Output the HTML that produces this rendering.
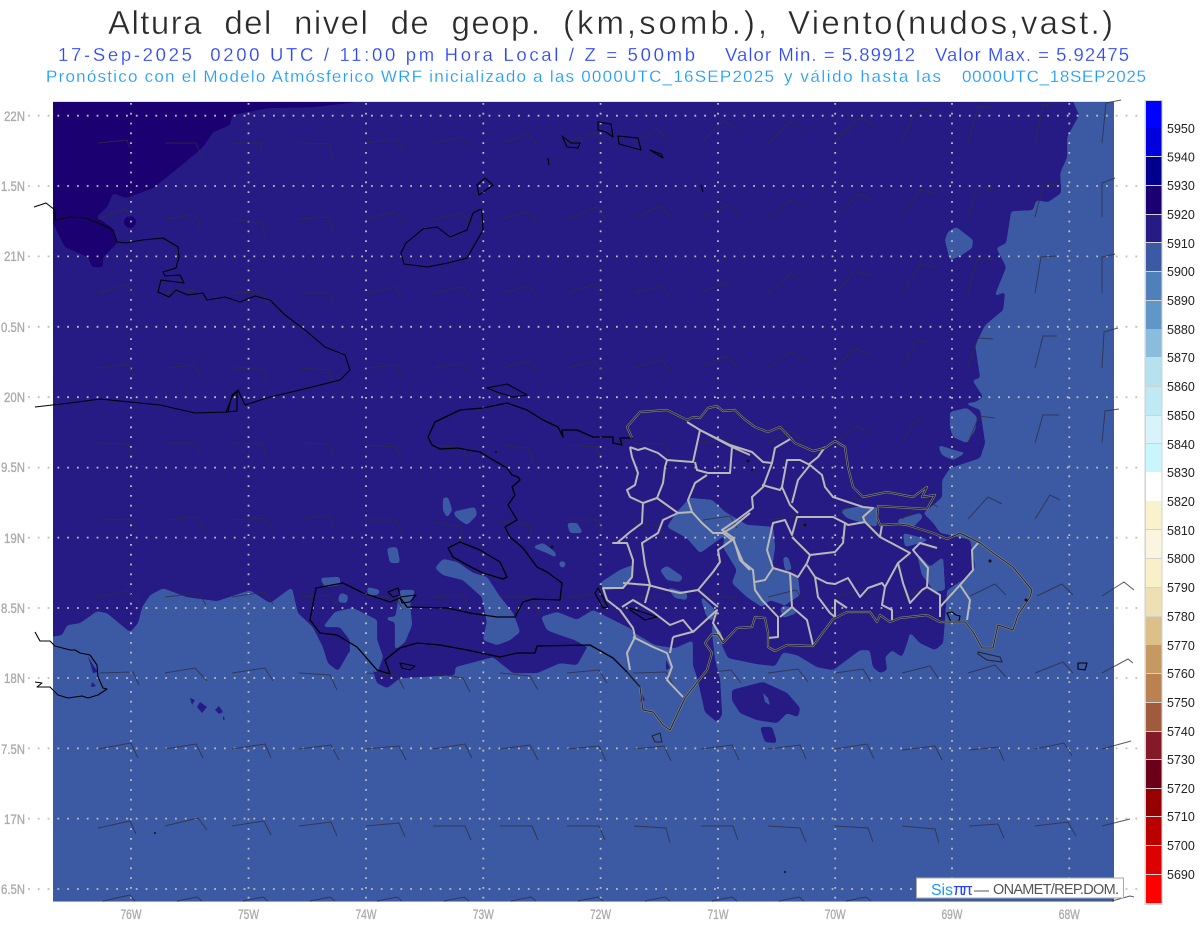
<!DOCTYPE html>
<html><head><meta charset="utf-8"><title>Altura del nivel de geop.</title>
<style>html,body{margin:0;padding:0;background:#fff}svg{display:block}text{font-family:"Liberation Sans",sans-serif}</style></head>
<body>
<svg width="1200" height="927" viewBox="0 0 1200 927" xmlns="http://www.w3.org/2000/svg">
<defs>
<filter id="g" filterUnits="userSpaceOnUse" x="0" y="60" width="1200" height="900" color-interpolation-filters="sRGB"><feGaussianBlur stdDeviation="1.7"/><feColorMatrix type="matrix" values="1 0 0 0 0 0 1 0 0 0 0 0 1 0 0 0 0 0 12 -5"/></filter>
<clipPath id="m"><rect x="53" y="102" width="1061" height="799"/></clipPath>
</defs>
<rect width="1200" height="927" fill="#fff"/>
<!-- titles -->
<g font-size="33" fill="#2b2b2b" stroke="#fff" stroke-width=".45">
<text x="108" y="34" textLength="432" lengthAdjust="spacing" xml:space="preserve">Altura  del  nivel  de  geop.</text>
<text x="563" y="34" textLength="204" lengthAdjust="spacing">(km,somb.),</text>
<text x="788" y="34" textLength="325" lengthAdjust="spacing">Viento(nudos,vast.)</text>
</g>
<g font-size="18.500" fill="#2a45ff" stroke="#fff" stroke-width=".2">
<text x="58" y="61" textLength="637" lengthAdjust="spacing" xml:space="preserve">17-Sep-2025  0200 UTC / 11:00 pm Hora Local / Z = 500mb</text>
<text x="725" y="61" textLength="190" lengthAdjust="spacing">Valor Min. = 5.89912</text>
<text x="935" y="61" textLength="194" lengthAdjust="spacing">Valor Max. = 5.92475</text>
</g>
<g font-size="17" fill="#1a9bff" stroke="#fff" stroke-width=".2">
<text x="46" y="82" textLength="728" lengthAdjust="spacing">Pronóstico con el Modelo Atmósferico WRF inicializado a las 0000UTC_16SEP2025</text>
<text x="784" y="82" textLength="157" lengthAdjust="spacing">y válido hasta las</text>
<text x="962" y="82" textLength="184" lengthAdjust="spacing">0000UTC_18SEP2025</text>
</g>

<!-- map base -->
<rect x="53" y="102" width="1061" height="799" fill="#3c5aa4"/>
<rect x="53" y="101" width="1061" height="1" fill="#dfe0ee"/>
<rect x="53" y="901" width="1061" height="1" fill="#8fa2d8"/>
<g clip-path="url(#m)">
<g filter="url(#g)">
<polygon fill="#261a85" points="30,80 1073,80 1073,102 1079,115 1067,137 1067,157 1060,173 1061,193 1048,202 1036,200 1033,210 1011,211 1006,243 996,248 1006,267 994,297 1005,292 1003,310 985,325 975,345 980,378 972,380 983,397 975,402 963,403 980,410 985,443 980,458 950,468 942,480 942,497 933,505 923,513 933,523 940,533 970,540 975,567 967,577 947,590 943,643 935,650 920,643 910,632 907,643 902,657 892,650 885,657 887,670 880,673 873,667 870,650 860,650 833,670 817,667 797,655 783,652 775,666 757,664 728,658 722,645 722,633 712,622 712,635 715,660 720,680 722,715 717,722 705,712 698,680 693,665 693,640 675,648 655,645 633,632 613,622 593,612 592,640 587,647 577,665 560,663 537,673 513,673 493,657 455,667 455,675 400,678 387,688 377,683 370,660 350,650 338,671 328,663 323,647 313,627 298,613 292,587 270,603 250,590 217,601 187,597 163,588 150,595 142,607 138,623 130,632 107,613 97,611 80,623 67,625 62,635 30,640"/>
</g>
<g filter="url(#g)">
<polygon fill="#1a0070" points="30,80 356,80 356,102 314,107 268,108 232,115 230,125 213,132 203,147 184,163 153,188 126,198 113,193 107,207 96,217 111,227 117,243 103,257 103,267 92,267 88,257 65,247 53,223 30,215"/>
<circle cx="130" cy="222" r="6" fill="#1a0070"/><circle cx="125" cy="183" r="3.500" fill="#1a0070"/>
</g>
<g filter="url(#g)" fill="#3c5aa4">
<polygon points="945,240 948,232 956,227 973,240 972,248 960,256 950,260"/>
<polygon points="950,412 967,408 977,417 975,430 967,443 953,437 950,427"/>
<polygon points="938,445 960,452 967,452 953,460 942,455"/>
<polygon points="443,498 448,497 452,510 447,518 443,510"/>
<polygon points="453,512 475,507 477,515 467,525 457,518"/>
<polygon points="567,523 577,523 583,533 570,533"/>
<polygon points="532,547 543,543 555,552 557,558 547,553"/>
<polygon points="559,561 566,562 564,568 560,567"/>
<polygon points="435,568 443,559 457,562 473,573 487,577 500,597 513,613 520,632 510,640 497,645 483,640 487,622 482,597 463,580 443,575"/>
<polygon points="387,548 397,547 400,563 390,563"/>
<polygon points="541,617 557,612 577,620 593,610 613,620 633,630 625,645 600,660 587,647 575,640 560,635 547,630"/>
<polygon points="335,612 353,608 377,620 377,640 383,657 377,673 350,657 350,640 340,627 323,627"/>
<polygon points="320,578 340,577 340,585 325,587"/>
<polygon points="367,587 380,590 378,595 368,595"/>
<polygon points="340,593 348,595 347,603 338,602"/>
<polygon points="387,617 397,617 395,622 387,620"/>
<polygon points="400,590 415,590 410,605 412,625 405,642 395,650 395,620"/>
<polygon points="667,527 677,512 690,498 712,500 725,512 747,525 773,527 775,547 772,567 798,577 800,595 785,605 770,600 762,607 747,597 732,583 737,570 723,547 725,535 700,553 687,538"/>
<polygon points="780,607 793,607 797,613 783,618"/>
<polygon points="783,557 788,557 792,570 785,570"/>
<polygon points="840,510 857,507 877,507 877,527 860,522 847,518"/>
<polygon points="897,520 920,513 923,517 913,527 900,525"/>
<polygon points="903,533 930,540 905,547"/>
<polygon points="917,553 930,567 943,557 945,590 933,592 930,585 922,575"/>
<polygon points="600,583 620,570 633,565 633,578 623,588 605,590"/>
<polygon points="660,570 667,566 683,577 680,582 667,580"/>
<polygon points="667,587 687,593 687,600 675,598"/>
<polygon points="700,595 715,610 712,622 706,615"/>
</g>
<g filter="url(#g)" fill="#261a85">
<polygon points="732,690 763,682 787,693 800,708 798,717 787,713 777,723 757,720 740,713 732,700"/>
<polygon points="760,727 772,727 777,743 765,742"/>
</g>
<g fill="#261a85">
<polygon points="190,698 195,700 192,705"/><polygon points="200,702 207,707 202,713 197,707"/><polygon points="219,706 223,712 219,714 215,710"/><polygon points="223,716 225,719 223,720"/>
<polygon points="88,656 93,665 98,672 93,673"/><polygon points="92,682 96,686 91,687"/>
<polygon points="640,690 645,700 640,702"/><polygon points="666,660 670,668 666,670"/>
</g>
<polygon points="763,693 768,698 770,705 765,702" fill="#3c5aa4"/>
</g>

<!-- grid -->
<g stroke="#bfbfb2" stroke-width="1.8" stroke-dasharray="1.800 8" fill="none">
<path d="M28 115.700H1140M28 186H1140M28 256.400H1140M28 326.800H1140M28 397.200H1140M28 467.600H1140M28 537.600H1140M28 608H1140M28 678H1140M28 748.400H1140M28 818.600H1140M28 889H1140"/>
<path d="M131 103V906M248.500 103V906M366 103V906M483.300 103V906M600.600 103V906M718 103V906M835.200 103V906M952 103V906M1069.300 103V906"/>
</g>

<!-- barbs -->
<path fill="none" stroke="#2e2e44" stroke-width="1" opacity=".8" d="
M98 143l29-3l3 8M165 143l31 0l6 15M232 143l29 0l0 7M299 143l30 1l4 16M366 143l30-4l7 13M434 143l28-6l9 12M501 143l28-9l8 12M567 143l28-10l8 11M634 143l22-14l12 11M701 143l22-22l14 8M768 143l22-21l14 8M834 143l25-25l14 7M901 143l15-32l16 0M968 143l10-36l16 0M1035 143l8-38l16-2M1102 143l4-40l15-3
M98 219l28-10l4 9M165 219l30-4l6 13M232 219l30 4l4 15M299 219l29-2l6 13M366 219l29-7l8 12M434 219l28-6l9 10M501 219l28-7l8 11M567 219l30-12l8 12M634 218l26-12l11 11M701 218l27-13l12 11M768 218l23-18l13 8M835 217l24-23l13 6M902 217l18-27l15 3M968 217l10-30l16 2M1035 217l8-32l16-1M1102 217l0-34l13-5
M98 293l29-8l9 12M165 293l30-3l6 12M232 293l30-1l6 13M299 293l30 0l5 13M366 293l29-6l8 12M434 293l28-6l9 10M501 293l28-7l8 11M567 293l28-9l8 11M634 293l27-7l10 11M701 293l26-11l11 11M768 293l23-19l13 8M835 293l20-22l18 5M902 293l18-29l15 3M968 293l9-34l17 0M1035 293l6-36l15-1M1102 293l0-36l13-3
M98 368l30-4l7 12M165 368l30-3l6 13M232 368l31 0l5 14M299 368l30 2l5 14M366 368l30-3l7 12M434 368l28-5l9 11M501 368l28-7l8 11M567 368l28-7l8 11M634 368l27-8l10 11M701 368l25-12l11 11M768 368l23-16l13 9M835 368l20-20l14 7M902 368l15-28l14 4M968 368l10-30l15 1M1035 368l8-32l14 0M1102 368l2-36l14-4
M98 443l30 1l5 13M165 443l30 0l5 13M232 443l30 1l5 14M299 443l30 1l5 13M366 445l30 2l5 13M433 445l30 3l5 13M500 445l28 3l5 13M567 445l30 2l3 13M633 443l32 1l5 13M700 443l30-3l7 12M768 443l23-12l13 11M838 440l20-14l13 9M902 443l15-24l5 5M968 443l11-27l16 2M1035 443l8-28l16 0M1102 443l3-32l14-2
M98 520l32-1l8 12M165 520l32-3l8 14M232 520l33-2l8 13M299 520l29-5l7 13M366 520l30 0l7 14M433 522l28 5l2 13M500 522l30 3l2 14M567 520l32 0l3 15M633 522l28 5l3 17M703 520l27-4l7 12M768 520l28-4l7 12M835 519l20-21l10 5M902 519l25-19l11 7M968 519l20-22l14 7M1035 519l15-24l10 5
M98 597l30-6l12 12M165 597l34-4l7 12M232 597l33-5l8 12M299 597l31-2l8 12M366 597l30 0l7 13M433 597l30-2l5 15M500 597l32 0l7 15M567 598l28-5l10 17M633 598l30-3l5 15M703 597l30 0l7 13M768 597l28-7l8 12M835 597l28-8l8 11M902 597l28-10l8 11M970 596l25-12l11 11M1037 596l25-12l11 11M1102 596l22-14l10 8
M100 673l33-1l6 13M165 673l30-5l12 13M232 673l33-5l8 13M299 673l31 2l7 15M366 673l31 2l7 14M433 673l30 5l7 14M500 673l30 3l8 14M567 673l32-3l8 13M633 673l33-1l7 13M703 673l28-3l10 13M768 673l30-4l10 13M835 673l28-4l8 13M902 673l28-7l8 12M968 673l27-8l11 12M1035 673l28-11l10 11M1102 673l26-14l5 4
M98 749l33-6l7 15M165 749l31-5l7 14M232 749l33-5l6 14M299 749l32-4l8 15M366 749l33-3l7 14M433 749l32-5l7 14M500 749l30-4l8 15M567 749l32-3l7 15M634 749l30-3l7 15M701 749l31-4l7 15M768 749l32-4l6 14M835 749l32-5l7 15M902 750l33-4l7 14M969 750l29-3l6 14M1035 749l29-6l8 13M1102 749l29-8
M98 828l32-7l6 13M165 826l33-8l9 12M232 826l32-5l7 14M299 826l32-4l6 14M366 826l33-3l6 14M433 826l32 0l6 14M500 826l32 0l6 14M567 826l32 0l6 14M634 826l32 2l4 15M701 826l32 0l5 14M768 826l32 2l6 14M835 826l33 2l5 14M902 826l33 3l4 14M969 826l29-2l6 14M1035 826l33-4l8 14M1102 826l28-7
M103 901l27-6l5 6M177 901l20-4l5 4M243 901l20-4l5 4M310 901l20-4l5 4M377 901l20-4l5 4M444 901l20-4l5 4M511 901l20-4l5 4M578 901l20-4l5 4M645 901l20-4l5 4M712 901l20-4l5 4M779 901l20-4l5 4M846 901l20-4l5 4M1112 901l18-5l4 1"/>

<!-- black coasts -->
<g fill="none" stroke="#000" stroke-width="1.1" stroke-linejoin="round">
<path d="M34 207 46 203 55 210 55 220 69 217 86 218 103 225 113 230 117 242 126 243 142 240 163 238 178 247 179 257 176 268 163 272 165 276 180 275 184 283 161 280 158 292 169 297 176 290 188 295 203 293 207 300 225 297 240 302 255 296 270 300 285 315 305 330 325 347 345 355 350 370 340 380 300 390 270 397 245 405 238 390 232 395 228 412 195 413 160 405 130 402 100 399 70 403 35 407"/>
<path d="M232 397 237 391 237 411 226 412z"/>
<path d="M481 209 473 213 467 230 450 237 437 227 423 229 406 243 401 253 404 264 427 267 448 263 467 258 483 230 482 213z"/>
<path d="M485 178 477 185 479 195 493 185z"/>
<path d="M562 136 567 147 578 148 580 143 571 143z"/>
<path d="M548 158 549 165"/>
<path d="M598 122 611 124 613 137 606 132 598 130z"/>
<path d="M618 136 638 138 641 150 619 144z"/>
<path d="M650 150 663 158 661 154z"/>
<path d="M701 185 703 192"/>
<path d="M35 632 40 641 50 641 55 646 70 650 75 650 80 653 90 655 97 665 98 677 103 688 107 689 98 695 88 698 82 696 68 698 58 695 50 687 37 687 42 683 35 682"/>
<path stroke-width="1.3" d="M428 437 435 422 460 410 483 408 507 403 527 410 543 420 558 427 563 437 562 430 577 430 593 437 613 437 613 443 622 445 620 438 633 438"/>
<path stroke-width="1.3" d="M428 437 432 445 440 449 458 448 468 450 480 452 493 460 507 468 512 475 518 477 520 480 512 487 515 495 508 505 517 520 505 527 510 537 523 548 537 567 547 572 562 583 560 600 533 599 523 602 515 617 497 617 470 613 447 608 407 607 402 600 400 598 390 602 363 593 343 583 316 588 310 620 320 633 337 635 357 647 377 670 390 674 385 660 400 648 417 643 440 645 467 650 500 657 517 653 535 653 537 646 590 645 613 658 627 672 640 687"/>
<path stroke-width="1.3" d="M448 548 460 542 480 550 500 562 507 577 503 579 483 573 467 565 453 557z"/>
<path d="M487 388 507 384 527 395 513 397 497 392z"/>
<path stroke-width="1.2" d="M598 588 608 607 603 608 595 593z"/>
<path d="M630 608 657 617 645 620 630 610z"/>
<path d="M400 597 416 595 410 602 402 603zM388 592 398 588 400 595 393 597z"/>
<path d="M400 663 415 666 410 670 402 668z"/>
<path d="M1078 663 1087 663 1085 670 1078 669z"/>
<path d="M947 613 952 612 956 615 960 616 959 621 951 622z"/>
</g>

<!-- province lines (gray) -->
<g fill="none" stroke="#b8b8b8" stroke-width="2" stroke-linejoin="round">
<path d="M630 447 638 450 645 448 658 453 667 460 665 467 663 483 657 498 643 503 630 497 627 490 635 485 638 473 632 457 630 447"/>
<path d="M643 503 642 523 630 532 617 543 613 543 627 543 633 560 632 577 623 588 603 588 607 600 620 610 633 628 635 637 627 653 630 670"/>
<path d="M633 637 653 647 667 653 672 667 667 680 683 697M673 637 670 653M673 637 692 632"/>
<path d="M623 583 648 585 667 590 680 593 698 590 713 603 718 607"/>
<path d="M698 590 713 572 720 562 718 550 732 540 723 533 733 527 750 513"/>
<path d="M645 603 650 585 645 565 642 543 658 533 663 520 678 513 692 512 688 500 695 483 707 475M692 512 702 523 713 533 723 533"/>
<path d="M657 498 678 513M667 460 693 462 700 430 687 422M695 462 697 470 708 473 730 473 732 447M700 430 732 447 750 455"/>
<path d="M733 537 740 560 750 570"/>
<path d="M622 607 633 600 653 612 670 625 683 620 693 632 717 610 713 623 723 640"/>
<path d="M700 430 730 445 752 452 763 462 772 463 763 487 752 497 753 508 737 520 722 530 732 537 743 562 753 570 755 590 762 600 778 617 778 637 768 638"/>
<path d="M755 582 765 580 773 568 767 550 773 523 785 520 792 535 797 517 833 517 845 523 843 543 835 552 810 555 792 537"/>
<path d="M773 568 790 573 798 577 807 563 810 555M790 573 792 607 807 620 813 645M780 617 792 607"/>
<path d="M807 565 815 577 827 583 835 584 848 578 860 597 868 588 882 583 885 587 882 605 892 610 892 620"/>
<path d="M815 577 818 597 830 613 835 617 835 600 847 608"/>
<path d="M885 587 898 563 910 553 880 537 865 522 848 525 845 523"/>
<path d="M898 563 903 583 910 603 922 590 927 587 940 595 940 617"/>
<path d="M927 587 928 568 913 550 920 543 937 548"/>
<path d="M940 607 960 585 970 600 967 620"/>
<path d="M960 585 973 570 972 550 978 543M880 537 882 525"/>
<path d="M865 522 863 517 873 508 863 507 833 497 825 487 822 475 810 465 800 460 787 460 782 487 790 505 798 513M810 465 798 480 792 503"/>
<path d="M762 485 780 490 782 487M825 447 818 457 808 465M792 438 775 448 772 463"/>
</g>

<!-- DR coast (dark with light halo) -->
<path fill="none" stroke="#8a8a8a" stroke-width="2.2" stroke-linejoin="round" d="M640 687 643 710 653 712 663 725 670 730 685 698 707 670 712 653 705 643 712 634 718 635 723 643 737 628 752 627 755 617 765 618 768 633 768 647 775 651 787 645 813 646 833 619 847 612 870 612 877 622 880 615 890 622 900 618 927 615 940 622 965 622 973 632 982 648 993 648 998 625 1013 630 1018 615 1030 597 1032 590 1013 567 993 553 980 543 960 533 947 539 933 533 907 525 900 524 880 525 877 517 878 506 927 509 935 495 922 497 927 487 913 497 887 492 863 497 853 487 848 467 845 447 835 441 825 448 813 451 795 443 780 427 768 432 755 427 743 418 735 410 723 411 717 406 708 408 700 418 693 417 687 420 667 410 640 412 627 427 632 438"/>
<path fill="none" stroke="#222" stroke-width="1" stroke-linejoin="round" d="M627 672 640 687 643 710 653 712 663 725 670 730 685 698 707 670 712 653 705 643 712 634 718 635 723 643 737 628 752 627 755 617 765 618 768 633 768 647 775 651 787 645 813 646 833 619 847 612 870 612 877 622 880 615 890 622 900 618 927 615 940 622 965 622 973 632 982 648 993 648 998 625 1013 630 1018 615 1030 597 1032 590 1013 567 993 553 980 543 960 533 947 539 933 533 907 525 900 524 880 525 877 517 878 506 927 509 935 495 922 497 927 487 913 497 887 492 863 497 853 487 848 467 845 447 835 441 825 448 813 451 795 443 780 427 768 432 755 427 743 418 735 410 723 411 717 406 708 408 700 418 693 417 687 420 667 410 640 412 627 427 632 438"/>
<path fill="none" stroke="#222" stroke-width="1" d="M978 652 1000 657 1002 662 987 660 978 654zM652 736 660 733 662 742 655 742z"/>
<g fill="#111"><circle cx="990" cy="561" r="1.500"/><circle cx="1026" cy="600" r="1.500"/><circle cx="805" cy="525" r="1.500"/><circle cx="748" cy="461" r="1.500"/><circle cx="752" cy="470" r="1"/><circle cx="667" cy="467" r="1"/><circle cx="552" cy="547" r="1.500"/><circle cx="496" cy="452" r="1"/><circle cx="785" cy="872" r="1"/><circle cx="155" cy="833" r="1"/></g>

<!-- axis labels -->
<g font-size="14" fill="#ababab" stroke="#ababab" stroke-width=".35" lengthAdjust="spacingAndGlyphs">
<text x="4" y="121" textLength="21" lengthAdjust="spacingAndGlyphs">22N</text><text x="1" y="191" textLength="24" lengthAdjust="spacingAndGlyphs">1.5N</text><text x="4" y="261" textLength="21" lengthAdjust="spacingAndGlyphs">21N</text><text x="1" y="332" textLength="24" lengthAdjust="spacingAndGlyphs">0.5N</text><text x="4" y="402" textLength="21" lengthAdjust="spacingAndGlyphs">20N</text><text x="1" y="472" textLength="24" lengthAdjust="spacingAndGlyphs">9.5N</text><text x="4" y="543" textLength="21" lengthAdjust="spacingAndGlyphs">19N</text><text x="1" y="613" textLength="24" lengthAdjust="spacingAndGlyphs">8.5N</text><text x="4" y="683" textLength="21" lengthAdjust="spacingAndGlyphs">18N</text><text x="1" y="754" textLength="24" lengthAdjust="spacingAndGlyphs">7.5N</text><text x="4" y="824" textLength="21" lengthAdjust="spacingAndGlyphs">17N</text><text x="1" y="894" textLength="24" lengthAdjust="spacingAndGlyphs">6.5N</text>
</g>
<g font-size="14" fill="#ababab" stroke="#ababab" stroke-width=".35">
<text x="120.500" y="919" textLength="21" lengthAdjust="spacingAndGlyphs">76W</text><text x="238" y="919" textLength="21" lengthAdjust="spacingAndGlyphs">75W</text><text x="355.500" y="919" textLength="21" lengthAdjust="spacingAndGlyphs">74W</text><text x="472.800" y="919" textLength="21" lengthAdjust="spacingAndGlyphs">73W</text><text x="590" y="919" textLength="21" lengthAdjust="spacingAndGlyphs">72W</text><text x="707.500" y="919" textLength="21" lengthAdjust="spacingAndGlyphs">71W</text><text x="824.700" y="919" textLength="21" lengthAdjust="spacingAndGlyphs">70W</text><text x="941.500" y="919" textLength="21" lengthAdjust="spacingAndGlyphs">69W</text><text x="1058.800" y="919" textLength="21" lengthAdjust="spacingAndGlyphs">68W</text>
</g>

<!-- footer box -->
<rect x="916.500" y="878" width="207" height="20" fill="#fff" stroke="#aaa"/>
<text x="931" y="895" font-size="16" fill="#1a9bff" textLength="22" lengthAdjust="spacing">Sis</text>
<text x="953" y="895" font-size="17" fill="#2a45ff" textLength="20" lengthAdjust="spacing">ππ</text>
<text x="974" y="895" font-size="15" fill="#555">—</text>
<text x="993" y="894" font-size="14.500" fill="#555" textLength="126" lengthAdjust="spacing">ONAMET/REP.DOM.</text>

<!-- legend -->
<rect x="1144.500" y="100" width="18" height="805" fill="#d2d2d2"/>
<g>
<rect x="1146" y="101" width="15.500" height="27" fill="#0000ff"/>
<rect x="1146" y="128" width="15.500" height="28" fill="#0000dc"/>
<rect x="1146" y="157" width="15.500" height="28" fill="#00008c"/>
<rect x="1146" y="186" width="15.500" height="28" fill="#1a0070"/>
<rect x="1146" y="215" width="15.500" height="27" fill="#261a85"/>
<rect x="1146" y="243" width="15.500" height="28" fill="#3c5aa4"/>
<rect x="1146" y="272" width="15.500" height="28" fill="#4f80ba"/>
<rect x="1146" y="301" width="15.500" height="28" fill="#6197c8"/>
<rect x="1146" y="329" width="15.500" height="28" fill="#8abcdc"/>
<rect x="1146" y="357" width="15.500" height="29" fill="#b5e2ee"/>
<rect x="1146" y="387" width="15.500" height="28" fill="#bfeaf5"/>
<rect x="1146" y="416" width="15.500" height="27" fill="#d8f4fa"/>
<rect x="1146" y="444" width="15.500" height="28" fill="#c8f6fc"/>
<rect x="1146" y="472" width="15.500" height="29" fill="#ffffff"/>
<rect x="1146" y="501" width="15.500" height="28" fill="#f8f3cd"/>
<rect x="1146" y="530" width="15.500" height="28" fill="#faf5de"/>
<rect x="1146" y="559" width="15.500" height="28" fill="#f8f0c8"/>
<rect x="1146" y="588" width="15.500" height="28" fill="#eee0b2"/>
<rect x="1146" y="617" width="15.500" height="28" fill="#dcc08a"/>
<rect x="1146" y="645" width="15.500" height="28" fill="#c59a62"/>
<rect x="1146" y="674" width="15.500" height="28" fill="#b98250"/>
<rect x="1146" y="703" width="15.500" height="28" fill="#a05a3c"/>
<rect x="1146" y="732" width="15.500" height="27" fill="#841a28"/>
<rect x="1146" y="760" width="15.500" height="28" fill="#6b0018"/>
<rect x="1146" y="789" width="15.500" height="27" fill="#960000"/>
<rect x="1146" y="817" width="15.500" height="28" fill="#bb0000"/>
<rect x="1146" y="846" width="15.500" height="28" fill="#dd0000"/>
<rect x="1146" y="875" width="15.500" height="28" fill="#ff0000"/>
</g>
<g font-size="12.500" fill="#222">
<text x="1167" y="133">5950</text><text x="1167" y="161.500">5940</text><text x="1167" y="190">5930</text><text x="1167" y="219">5920</text><text x="1167" y="248">5910</text><text x="1167" y="276">5900</text><text x="1167" y="305">5890</text><text x="1167" y="334">5880</text><text x="1167" y="362">5870</text><text x="1167" y="391">5860</text><text x="1167" y="420">5850</text><text x="1167" y="449">5840</text><text x="1167" y="477">5830</text><text x="1167" y="506">5820</text><text x="1167" y="535">5810</text><text x="1167" y="563">5800</text><text x="1167" y="592">5790</text><text x="1167" y="621">5780</text><text x="1167" y="650">5770</text><text x="1167" y="678">5760</text><text x="1167" y="707">5750</text><text x="1167" y="736">5740</text><text x="1167" y="764">5730</text><text x="1167" y="793">5720</text><text x="1167" y="821">5710</text><text x="1167" y="850">5700</text><text x="1167" y="879">5690</text>
</g>
</svg>
</body></html>
